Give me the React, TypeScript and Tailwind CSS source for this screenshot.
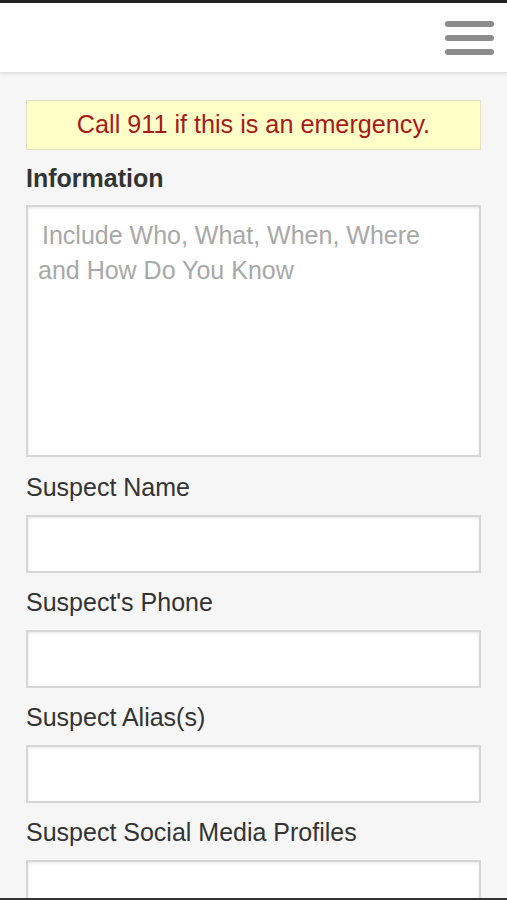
import React from "react";

const fields = ["Suspect Name", "Suspect's Phone", "Suspect Alias(s)", "Suspect Social Media Profiles"];

export default function App() {
  return (
    <div className="min-h-[900px] bg-[#f6f6f6] font-['Liberation_Sans',Arial,sans-serif] text-[#333]">
      <header className="relative z-10 box-border flex h-[73px] justify-end border-t-[3px] border-b border-b-[#e2e2e2] border-t-[#222] bg-white pr-[13px] pt-[18px] shadow-[0_1px_3px_rgba(0,0,0,0.1)]">
        <div className="flex w-[49px] flex-col gap-[8px]">
          <span className="block h-[6px] rounded-full bg-[#8c8c8c]" />
          <span className="block h-[6px] rounded-full bg-[#8c8c8c]" />
          <span className="block h-[6px] rounded-full bg-[#8c8c8c]" />
        </div>
      </header>
      <main className="px-[26px] pt-[27px]">
        <div className="flex h-[50px] items-center justify-center border border-[#e3e3c4] bg-[#ffffc7] text-[25.2px] text-[#a81a1a]">
          Call 911 if this is an emergency.
        </div>
        <div className="mt-[13px] text-[25px] font-bold leading-[30px] text-[#333]">Information</div>
        <div className="mt-[12px] box-border h-[252px] border-2 border-[#d6d6d6] bg-white px-[10px] pt-[11px] text-[25px] leading-[35px] text-[#a8a8a8] shadow-[inset_0_1px_3px_rgba(0,0,0,0.1)]">
          <div className="pl-[4px]">Include Who, What, When, Where</div>
          <div>and How Do You Know</div>
        </div>
        {fields.map((f, i) => (
          <div key={f}>
            <div className={i === 0 ? "mt-[15px] text-[25px] leading-[30px] text-[#333]" : "mt-[14px] text-[25px] leading-[30px] text-[#333]"}>{f}</div>
            <div className="mt-[13px] box-border h-[58px] border-2 border-[#d6d6d6] bg-white shadow-[inset_0_1px_3px_rgba(0,0,0,0.1)]" />
          </div>
        ))}
      </main>
      <div className="fixed bottom-0 left-0 right-0 h-[2px] bg-[#333]" />
    </div>
  );
}
